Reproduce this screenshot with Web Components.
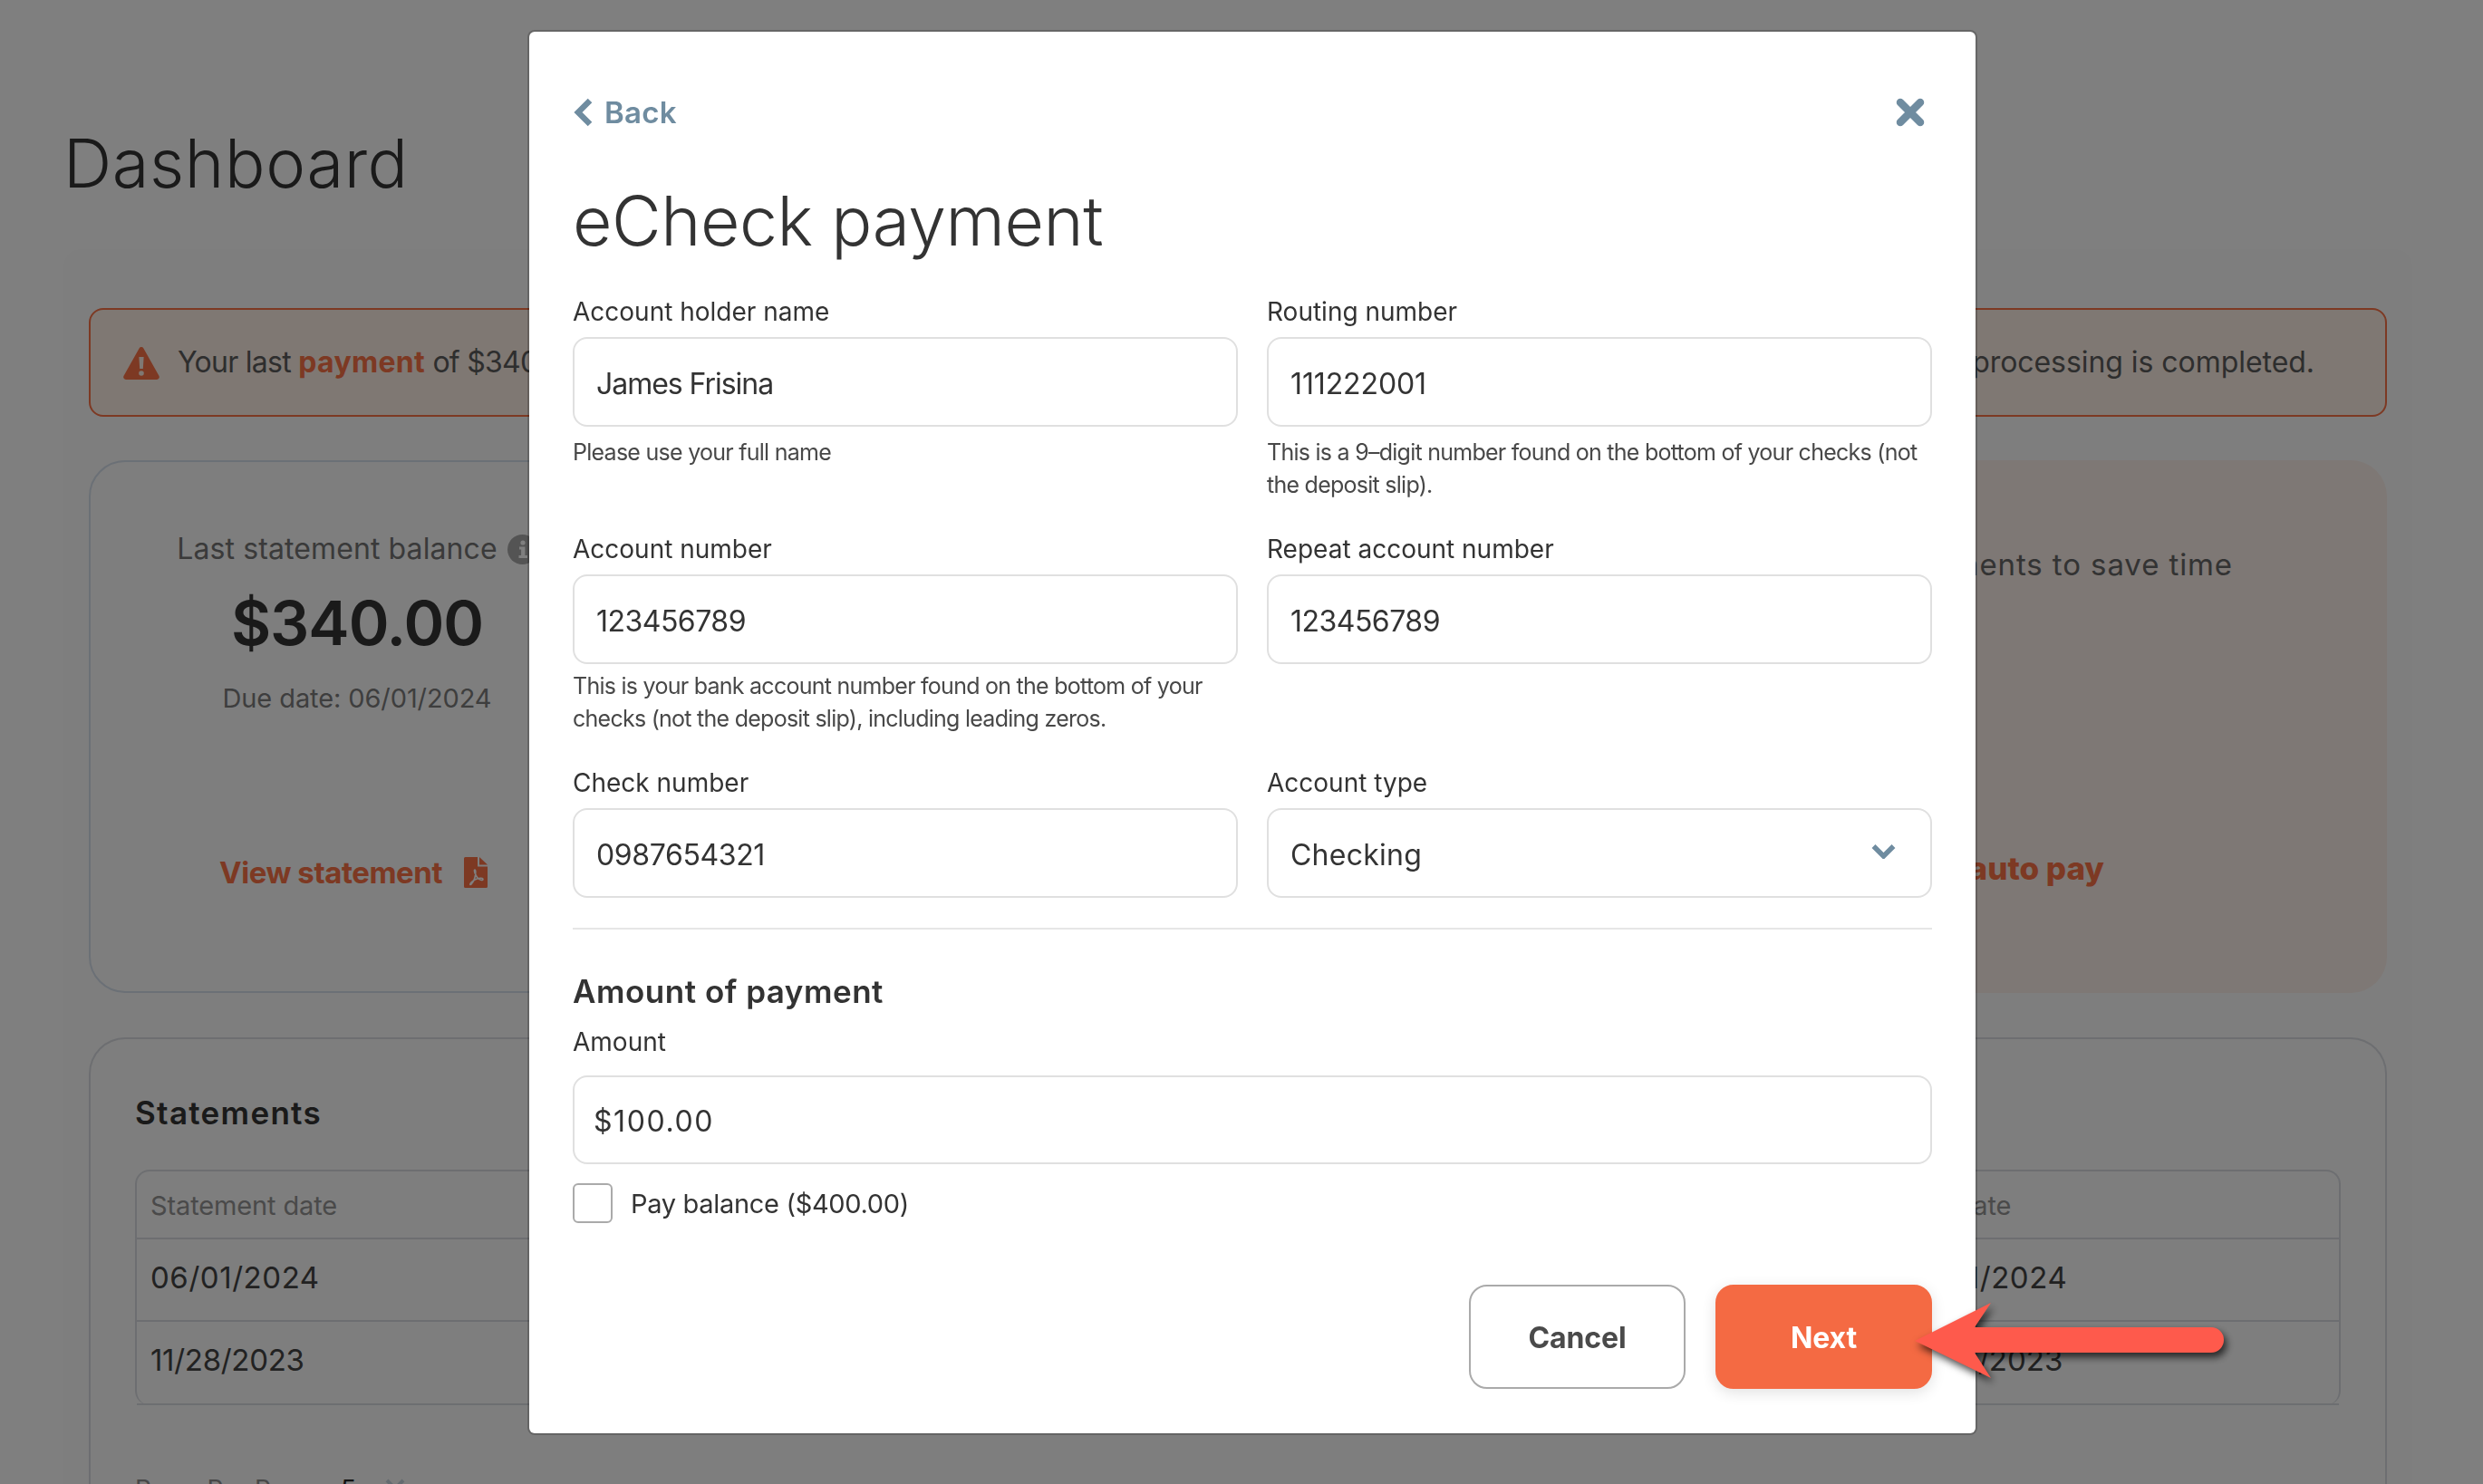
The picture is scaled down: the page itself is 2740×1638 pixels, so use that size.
<!doctype html>
<html lang="en">
<head>
<meta charset="utf-8">
<title>Dashboard</title>
<style>
  html, body { margin: 0; height: 100%; overflow: hidden; background: #fff; font-family: Inter, "Liberation Sans", sans-serif; }
  b.accent { font-weight: 700; letter-spacing: 0.3px; color: #fb7347; }
</style>
</head>
<body>
<dash-page>
  <alert-bar>
    <span slot="start">Your last <b class="accent">payment</b> of $340.00</span>
    <span slot="end">processing is completed.</span>
  </alert-bar>
  <card-row>
    <balance-card></balance-card>
    <promo-card></promo-card>
  </card-row>
  <statements-card></statements-card>
</dash-page>

<modal-overlay>
  <pay-modal>
    <span slot="title">eCheck payment</span>
    <field-grid>
      <form-field style="--value-ls:-1.04px">
        <span slot="label">Account holder name</span>James Frisina
        <span slot="hint">Please use your full name</span>
      </form-field>
      <form-field style="--value-ls:-0.11px">
        <span slot="label">Routing number</span>111222001
        <span slot="hint">This is a 9–digit number found on the bottom of your checks (not the deposit slip).</span>
      </form-field>
      <form-field style="--value-ls:-0.51px;--hint-top:6px">
        <span slot="label">Account number</span>123456789
        <span slot="hint">This is your bank account number found on the bottom of your checks (not the deposit slip), including leading zeros.</span>
      </form-field>
      <form-field style="--value-ls:-0.51px">
        <span slot="label">Repeat account number</span>123456789
      </form-field>
      <form-field style="--value-ls:-0.37px">
        <span slot="label">Check number</span>0987654321
      </form-field>
      <form-field select style="--value-ls:0.24px">
        <span slot="label">Account type</span>Checking
      </form-field>
    </field-grid>
    <hr-line></hr-line>
    <section-title>Amount of payment</section-title>
    <form-field style="--value-ls:1.59px;--label-gap:19px;--input-h:98px;--value-pad:21px;margin-top:15px">
      <span slot="label">Amount</span>$100.00
    </form-field>
    <check-row>Pay balance ($400.00)</check-row>
    <action-row>
      <ui-button>Cancel</ui-button>
      <ui-button primary>Next</ui-button>
    </action-row>
  </pay-modal>
  <callout-arrow></callout-arrow>
</modal-overlay>

<script>
/**
 * Registers a custom element from a piece of markup.
 * The markup is cloned into an open shadow root.
 *
 * @param {string} name - The tag name.
 * @param {string} html - The styles and markup of the element.
 */
function define (name, html) {
  const template = document.createElement('template')
  template.innerHTML = html
  customElements.define(name, class extends HTMLElement {
    constructor () {
      super()
      this.attachShadow({ mode: 'open' })
        .appendChild(template.content.cloneNode(true))
    }
  })
}

// Colours behind the overlay are lighter than they look, the overlay halves them.
const ORANGE = '#fb7347'

define('dash-page', `
<style>
:host { display: block; padding: 135px 78px 0 70px; }
h1 { margin: 0 0 50px; font: 300 74px/90px Inter, sans-serif; letter-spacing: 0.6px; color: #343434; }
.panel { background: #fcfcfc; border-radius: 20px; padding: 65px 28px 0; }
</style>
<h1>Dashboard</h1>
<div class="panel"><slot></slot></div>
`)

define('alert-bar', `
<style>
:host { display: flex; align-items: center; gap: 20px; height: 120px; box-sizing: border-box; padding: 0 78px 0 36px;
  border: 2px solid ${ORANGE}; border-radius: 16px; background: #fef0e6; margin-bottom: 48px;
  font: 400 32px/40px Inter, sans-serif; color: #5c5c5c; }
svg { flex: none; display: block; margin-top: 2px; }
.text { flex: 1; display: flex; justify-content: space-between; letter-spacing: -0.72px; }
::slotted([slot=end]) { letter-spacing: -0.05px; }
</style>
<svg width="40" height="36" viewBox="0 0 40 36">
  <path fill="${ORANGE}" d="M17.6 1.4a2.8 2.8 0 0 1 4.8 0l17 30.4a2.8 2.8 0 0 1-2.4 4.2H3a2.8 2.8 0 0 1-2.4-4.2z"/>
  <path fill="#fef0e6" d="M17.4 11h5.2l-.8 13h-3.600z"/>
  <circle fill="#fef0e6" cx="20" cy="29" r="2.8"/>
</svg>
<div class="text"><slot name="start"></slot><slot name="end"></slot></div>
`)

define('card-row', `
<style>
:host { display: grid; grid-template-columns: 592px 1fr; gap: 32px; height: 588px; margin-bottom: 49px; }
</style>
<slot></slot>
`)

define('balance-card', `
<style>
:host { display: flex; flex-direction: column; align-items: center; box-sizing: border-box; padding-top: 76px;
  border: 2px solid #d6e0ec; border-radius: 40px; font-family: Inter, sans-serif; }
.last { display: flex; align-items: center; gap: 11px; font-size: 32px; line-height: 40px; letter-spacing: 0.1px; color: #747474; }
.amount { margin-top: 21px; font-size: 68px; line-height: 80px; font-weight: 600; letter-spacing: -1px; color: #343434; }
.due { margin-top: 24px; font-size: 29px; line-height: 40px; letter-spacing: -0.1px; color: #7c7c7c; }
.view { display: flex; align-items: center; gap: 24px; margin: 152px 8px 0 0; font-size: 33px; line-height: 40px; font-weight: 700; letter-spacing: -0.45px; color: ${ORANGE}; }
svg { display: block; flex: none; }
</style>
<div class="last">Last statement balance
  <svg width="33" height="33" viewBox="0 0 33 33">
    <circle cx="16.500" cy="16.500" r="16.500" fill="#a8a8a8"/>
    <circle cx="17" cy="9" r="2.600" fill="#fff"/>
    <path fill="#fff" d="M13 13.500h6.400V23H22v3H12.500v-3h2.600v-6.500H13z"/>
  </svg>
</div>
<div class="amount">$340.00</div>
<div class="due">Due date: 06/01/2024</div>
<div class="view">View statement
  <svg width="26" height="34" viewBox="0 0 26 34">
    <path fill="${ORANGE}" d="M1.500 0H15v10.500h11V32.500a1.500 1.500 0 0 1-1.500 1.500h-23A1.500 1.500 0 0 1 0 32.500v-31A1.500 1.500 0 0 1 1.500 0z"/>
    <path fill="${ORANGE}" d="M17 0l9 8.500h-9z"/>
    <path fill="none" stroke="#fff" stroke-width="1.600" d="M12 14c-1.500 0 .5 6 3 9 1.800 2 6 3.500 6 1.500s-5-1.500-9 .5c-3 1.500-6 5-5 5.500s4-4 5-8c.5-2 1.500-8.500 0-8.500z"/>
  </svg>
</div>
`)

define('promo-card', `
<style>
:host { display: flex; flex-direction: column; justify-content: space-between; box-sizing: border-box; padding: 95px 0 118px;
  border-radius: 40px; background: #fcf0ea; text-align: right; font-family: Inter, sans-serif; line-height: 40px; }
.save { padding-right: 170px; font-size: 33px; letter-spacing: 0.9px; color: #666; }
.auto { padding-right: 312px; font-size: 35px; font-weight: 800; color: ${ORANGE}; }
</style>
<div class="save">payments to save time</div>
<div class="auto">Enroll in auto pay</div>
`)

define('statements-card', `
<style>
:host { display: block; box-sizing: border-box; height: 640px; padding: 59px 49px 0; border: 2px solid #dadde2; border-bottom: 0;
  border-radius: 40px 40px 0 0; font-family: Inter, sans-serif; }
h2 { margin: 0 0 41px; font-size: 35px; line-height: 44px; font-weight: 600; letter-spacing: 1.3px; color: #343434; }
.table { border: 2px solid #dadde2; border-bottom: 0; border-radius: 16px; }
.row { display: grid; grid-template-columns: 1fr 499px; align-items: center; box-sizing: border-box; height: 91px; padding-bottom: 6px;
  border-bottom: 2px solid #dadde2; font-size: 33px; color: #444; }
.row.last { height: 92px; }
.row.head { height: 75px; padding: 2px 0 0; font-size: 29px; color: #949494; }
.row div { padding-left: 15px; }
.ls-a { letter-spacing: 0.55px; }
.ls-b { letter-spacing: -0.3px; }
.ls-c { letter-spacing: 0; }
.head div { letter-spacing: -0.13px; }
.pager { display: flex; align-items: flex-start; gap: 20px; margin-top: 73px; font-size: 28px; line-height: 40px; color: #909090; }
.pager b { font-weight: 400; color: #222; }
.pager svg { margin: 8px 0 0 12px; }
</style>
<h2>Statements</h2>
<div class="table">
  <div class="row head"><div>Statement date</div><div>Due date</div></div>
  <div class="row"><div class="ls-a">06/01/2024</div><div class="ls-a">07/01/2024</div></div>
  <div class="row last"><div class="ls-b">11/28/2023</div><div class="ls-c">12/28/2023</div></div>
</div>
<div class="pager">Rows Per Page: <b>5</b>
  <svg width="22" height="14" viewBox="0 0 22 14"><path fill="none" stroke="#c9d6e0" stroke-width="4" d="M2 2l9 9 9-9"/></svg>
</div>
`)

define('modal-overlay', `
<style>
:host { position: fixed; inset: 0; display: block; box-sizing: border-box; padding: 35px 0 0 584px; background: rgba(0, 0, 0, 0.5); }
</style>
<slot></slot>
`)

define('pay-modal', `
<style>
:host { display: block; box-sizing: border-box; width: 1596px; height: 1547px; padding: 73px 48px 49px; background: #fff; border-radius: 6px;
  box-shadow: 0 0 0 2px rgba(0, 0, 0, 0.2); font-family: Inter, sans-serif; color: #333; }
.top { display: flex; justify-content: space-between; align-items: center; height: 32px; }
.back { display: flex; align-items: center; gap: 13px; font-size: 33px; font-weight: 600; letter-spacing: 0.3px; color: #6f8ca0; }
svg { display: block; }
.close { margin-right: 8px; }
h1 { margin: 59px 0 37px; font-size: 75px; line-height: 90px; font-weight: 300; letter-spacing: -0.45px; color: #333; }
</style>
<div class="top">
  <div class="back">
    <svg width="22" height="32" viewBox="0 0 22 32"><path fill="none" stroke="#6f8ca0" stroke-width="6.500" d="M19 3L6 16l13 13"/></svg>
    Back
  </div>
  <svg class="close" width="32" height="32" viewBox="0 0 32 32"><path fill="none" stroke="#6f8ca0" stroke-width="8.500" stroke-linecap="round" d="M5 5l22 22M27 5L5 27"/></svg>
</div>
<h1><slot name="title"></slot></h1>
<slot></slot>
`)

define('field-grid', `
<style>
:host { display: grid; grid-template-columns: 734px 734px; column-gap: 32px; row-gap: 34px; align-items: start; }
</style>
<slot></slot>
`)

define('form-field', `
<style>
:host { display: block; font-size: 28px; line-height: 36px; color: #333; }
.box { display: flex; align-items: center; justify-content: space-between; box-sizing: border-box; height: var(--input-h, 99px);
  margin-top: var(--label-gap, 10px); padding: 4px 38px 0 var(--value-pad, 24px); border: 2px solid #e0e0e0; border-radius: 16px;
  font-size: 32px; letter-spacing: var(--value-ls, 0); }
svg { display: none; margin-top: -9px; }
:host([select]) svg { display: block; }
::slotted([slot=hint]) { display: block; margin-top: var(--hint-top, 10px); margin-bottom: 1px; font-size: 25px; line-height: 36px;
  letter-spacing: -0.74px; color: #484848; }
</style>
<slot name="label"></slot>
<div class="box">
  <span><slot></slot></span>
  <svg width="27" height="17" viewBox="0 0 27 17"><path fill="none" stroke="#6f8ca0" stroke-width="5.500" d="M2.500 3l11 11 11-11"/></svg>
</div>
<slot name="hint"></slot>
`)

define('hr-line', `
<style>
:host { display: block; height: 2px; margin-top: 33px; background: #e6e6e6; }
</style>
`)

define('section-title', `
<style>
:host { display: block; margin-top: 45px; font-size: 35px; line-height: 46px; font-weight: 600; letter-spacing: 0.51px; color: #333; }
</style>
<slot></slot>
`)

define('check-row', `
<style>
:host { display: flex; align-items: center; gap: 20px; height: 44px; margin-top: 21px; font-size: 29px; line-height: 40px; letter-spacing: -0.32px; color: #333; }
.box { width: 44px; height: 44px; box-sizing: border-box; border: 2px solid #aaa; border-radius: 6px; }
.label { padding-top: 2px; }
</style>
<div class="box"></div>
<span class="label"><slot></slot></span>
`)

define('action-row', `
<style>
:host { display: flex; justify-content: flex-end; gap: 33px; margin-top: 68px; }
</style>
<slot></slot>
`)

define('ui-button', `
<style>
:host { display: flex; align-items: center; justify-content: center; box-sizing: border-box; width: 239px; height: 115px; padding-top: 2px;
  border: 2px solid #aaa; border-radius: 20px; font-size: 32px; font-weight: 700; letter-spacing: -0.13px; color: #4a4a4a; background: #fff; }
:host([primary]) { border-color: #f46a43; background: #f46a43; color: #fff; box-shadow: 0 4px 16px rgba(0, 0, 0, 0.12); }
</style>
<slot></slot>
`)

// The red annotation arrow lies over the modal and the page.
define('callout-arrow', `
<style>
:host { position: absolute; left: 2110px; top: 1430px; display: block; width: 350px; height: 100px; }
svg { display: block; overflow: visible; filter: drop-shadow(3px 5px 4px rgba(0, 0, 0, 0.7)); }
</style>
<svg width="350" height="100" viewBox="0 0 350 100">
  <path fill="#fe5a4c" d="M3 50L87 8 69 35H330a14 14 0 0 1 0 28H69L87 91z"/>
</svg>
`)
</script>
</body>
</html>
